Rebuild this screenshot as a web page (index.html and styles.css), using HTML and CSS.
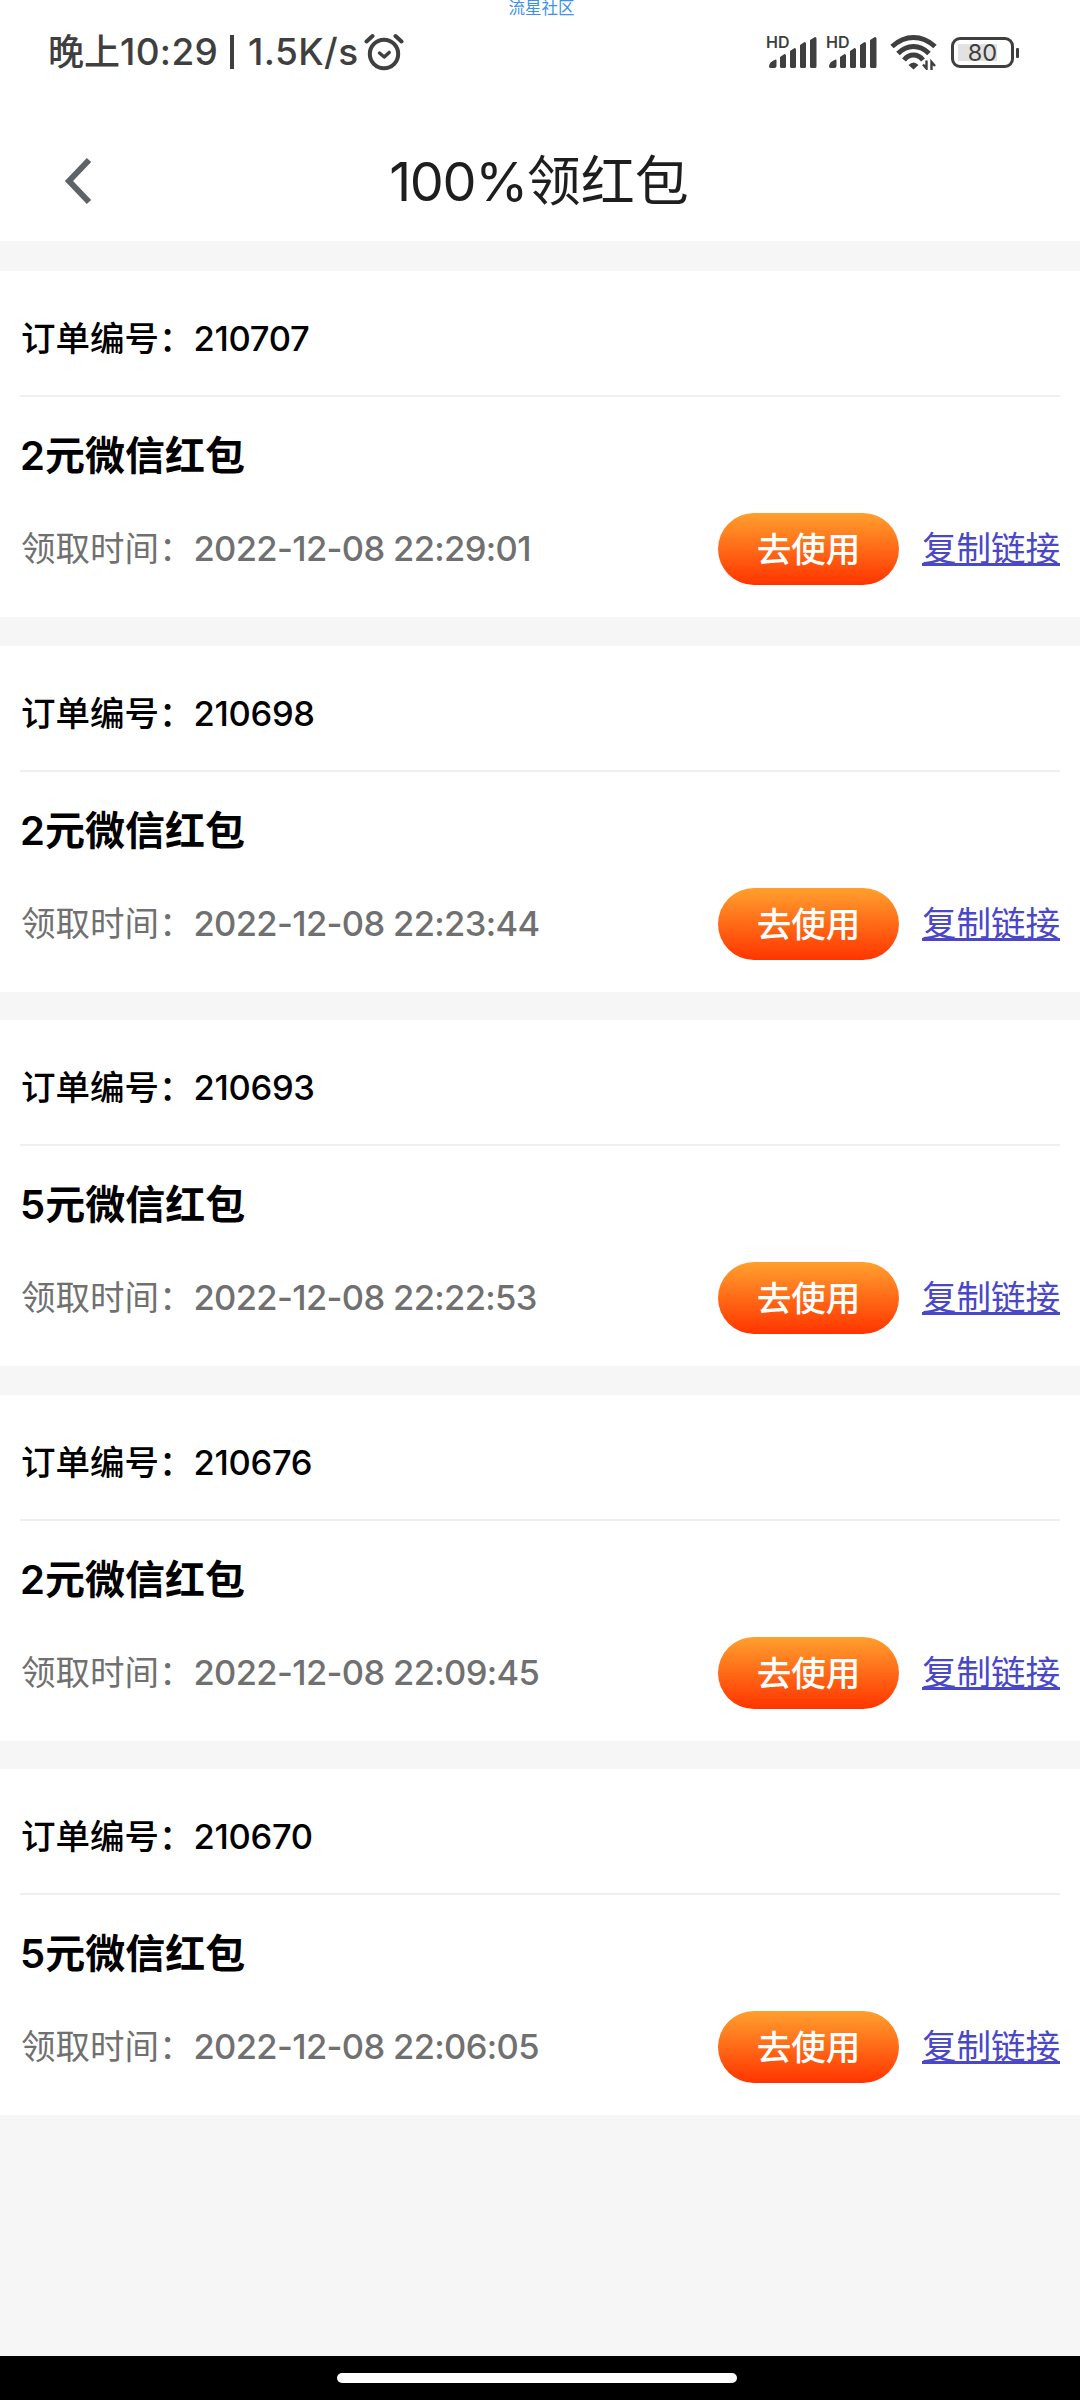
FILE: index.html
```html
<!DOCTYPE html>
<html lang="zh-CN">

<head>
    <meta charset="UTF-8">
    <meta name="viewport" content="width=device-width, initial-scale=1.0">
    <title>100%领红包</title>
    <link rel="stylesheet" href="styles.css">
</head>

<body>
    <div class="watermark">流星社区</div>

    <div class="status-bar">
        <div class="status-left">
            <span class="status-time">晚上<span>10:29</span></span>
            <span class="status-sep"></span>
            <span class="status-speed">1.5K/s</span>
            <svg class="alarm" width="40" height="38" viewBox="0 0 40 38" fill="none" stroke="#3f3f3f" stroke-linecap="round">
                <circle cx="20" cy="21" r="14.2" stroke-width="4" />
                <path d="M15.5 20l4.7 4 5-4.6" stroke-width="3.4" stroke-linejoin="round" />
                <path d="M2.5 8.5l6-5.5M37.5 8.5l-6-5.5" stroke-width="4" />
            </svg>
        </div>
        <div class="status-right">
            <div class="signal">
                <span class="hd">HD</span>
                <svg width="52" height="34" viewBox="0 0 52 34" fill="#3f3f3f">
                    <path d="M2 31.500Q2 27 8.500 24.500q1 0 1 1V31q0 2-2 2H4Q2 33 2 31.500zM13 22l4.500-3q1.500 0 1.500 1.500V31.500q0 1.500-1.500 1.500h-3Q13 33 13 31.500zM23 16l4.500-3q1.500 0 1.500 1.500v17q0 1.500-1.500 1.500h-3Q23 33 23 31.500zM33 10l4.500-3q1.500 0 1.500 1.500v23q0 1.500-1.500 1.500h-3Q33 33 33 31.500zM43 5l5-3q1.500 0 1.500 1.500v28q0 1.500-1.500 1.500h-3.500Q43 33 43 31.500z" />
                </svg>
            </div>
            <div class="signal">
                <span class="hd">HD</span>
                <svg width="52" height="34" viewBox="0 0 52 34" fill="#3f3f3f">
                    <path d="M2 31.500Q2 27 8.500 24.500q1 0 1 1V31q0 2-2 2H4Q2 33 2 31.500zM13 22l4.500-3q1.500 0 1.500 1.500V31.500q0 1.500-1.500 1.500h-3Q13 33 13 31.500zM23 16l4.500-3q1.500 0 1.500 1.500v17q0 1.500-1.500 1.500h-3Q23 33 23 31.500zM33 10l4.500-3q1.500 0 1.500 1.500v23q0 1.500-1.500 1.500h-3Q33 33 33 31.500zM43 5l5-3q1.500 0 1.500 1.500v28q0 1.500-1.500 1.500h-3.500Q43 33 43 31.500z" />
                </svg>
            </div>
            <svg class="wifi" width="48" height="36" viewBox="0 0 48 36" fill="none" stroke="#3f3f3f" stroke-width="5">
                <path d="M2 12.500Q12 3.500 23.500 3.500T45 12.500" />
                <path d="M8 19.500Q15 12.500 23.500 12.500T39 19.500" />
                <path d="M14 26Q18 21 23.500 21T33 26" />
                <path d="M18.500 31q5-5 10 0l-5 4.500z" fill="#3f3f3f" stroke="none" />
                <path d="M36.500 26.500v8l-3.500-4M41.500 36v-8l3.500 4" stroke-width="2.400" />
            </svg>
            <div class="battery"><span>80</span></div>
        </div>
    </div>

    <div class="header">
        <svg class="back" width="30" height="50" viewBox="0 0 30 50" fill="none" stroke="#5d6366" stroke-width="6">
            <path d="M25 4L5 25l20 21" />
        </svg>
        <h1><span>100%</span>领红包</h1>
    </div>

    <div class="list">
        <div class="card">
            <div class="order">订单编号：<span>210707</span></div>
            <h2>2元微信红包</h2>
            <div class="row">
                <div class="time">领取时间：<span>2022-12-08 22:29:01</span></div>
                <a class="btn">去使用</a>
                <a class="copy">复制链接</a>
            </div>
        </div>
        <div class="card">
            <div class="order">订单编号：<span>210698</span></div>
            <h2>2元微信红包</h2>
            <div class="row">
                <div class="time">领取时间：<span>2022-12-08 22:23:44</span></div>
                <a class="btn">去使用</a>
                <a class="copy">复制链接</a>
            </div>
        </div>
        <div class="card">
            <div class="order">订单编号：<span>210693</span></div>
            <h2>5元微信红包</h2>
            <div class="row">
                <div class="time">领取时间：<span>2022-12-08 22:22:53</span></div>
                <a class="btn">去使用</a>
                <a class="copy">复制链接</a>
            </div>
        </div>
        <div class="card">
            <div class="order">订单编号：<span>210676</span></div>
            <h2>2元微信红包</h2>
            <div class="row">
                <div class="time">领取时间：<span>2022-12-08 22:09:45</span></div>
                <a class="btn">去使用</a>
                <a class="copy">复制链接</a>
            </div>
        </div>
        <div class="card">
            <div class="order">订单编号：<span>210670</span></div>
            <h2>5元微信红包</h2>
            <div class="row">
                <div class="time">领取时间：<span>2022-12-08 22:06:05</span></div>
                <a class="btn">去使用</a>
                <a class="copy">复制链接</a>
            </div>
        </div>
    </div>

    <div class="nav-bar">
        <div class="pill"></div>
    </div>
</body>

</html>
```
FILE: styles.css
```css
* {
    box-sizing: border-box;
}

body {
    margin: 0;
    height: 2400px;
    display: flex;
    flex-direction: column;
    font-family: Inter, "Noto Sans CJK SC", sans-serif;
    background-color: #f6f6f6;
    overflow: hidden;
}

/* 顶部水印 */
.watermark {
    position: absolute;
    top: 0;
    left: 0;
    width: 1083px;
    text-align: center;
    font-size: 16.5px;
    line-height: 17px;
    color: #3c92e8;
}

.status-bar {
    height: 104px;
    padding: 0 61px 0 48px;
    display: flex;
    justify-content: space-between;
    background: white;
    color: #3f3f3f;
}

.status-left {
    display: flex;
    height: 104px;
    align-items: center;
    font-size: 36px;
    font-weight: 500;
    line-height: 106px;
}

.status-time {
    width: 182px;
    white-space: nowrap;
}

.status-time span {
    font-size: 37px;
    letter-spacing: 0.3px;
}

.status-sep {
    width: 4px;
    height: 34px;
    background: #3f3f3f;
}

.status-speed {
    width: 114px;
    margin-left: 14px;
    font-size: 37px;
    letter-spacing: 0.4px;
    white-space: nowrap;
}

.alarm {
    margin-left: 2px;
}

.status-right {
    display: flex;
    align-items: center;
}

.signal {
    position: relative;
    width: 60px;
    height: 34px;
}

.signal svg {
    display: block;
}

.hd {
    position: absolute;
    left: -1px;
    top: -1px;
    font-size: 16px;
    font-weight: 600;
    line-height: 16px;
}

.wifi {
    margin-left: 3px;
}

.battery {
    position: relative;
    width: 63px;
    height: 31px;
    margin: 0 5px 0 13px;
    border: 3px solid #3f3f3f;
    border-radius: 9px;
    background: linear-gradient(#e2e2e2, #e2e2e2) 4px 4px / 39px 17px no-repeat;
    font-size: 23.5px;
    line-height: 26px;
    text-align: center;
}

.battery::after {
    content: "";
    position: absolute;
    right: -8px;
    top: 8px;
    width: 3px;
    height: 10px;
    border-radius: 1px;
    background: #3f3f3f;
}

.header {
    height: 137px;
    padding: 17px 64px 0;
    display: flex;
    align-items: center;
    background: white;
}

.header h1 {
    flex: 1;
    margin: 0 32px 0 0;
    text-align: center;
    font-size: 54px;
    font-weight: 400;
    line-height: 121px;
    color: #1e1e1e;
}

.header h1 span {
    letter-spacing: -1.4px;
}

.list {
    flex: 1;
    padding-top: 30px;
}

.card {
    height: 346px;
    margin-bottom: 28.6px;
    padding: 0 20px;
    background: white;
}

.order {
    height: 126px;
    padding-left: 1px;
    border-bottom: 2px solid #efefef;
    font-size: 34.5px;
    font-weight: 500;
    line-height: 136px;
    color: #000;
}

.order span {
    letter-spacing: -0.3px;
}

.card h2 {
    height: 116px;
    margin: 0;
    font-size: 40px;
    font-weight: 600;
    line-height: 117px;
}

.row {
    display: flex;
    align-items: center;
    height: 72px;
}

.time {
    flex: 1;
    padding-left: 1px;
    font-size: 34.5px;
    line-height: 74px;
    color: #707070;
}

.time span {
    font-weight: 500;
    letter-spacing: -0.65px;
}

.btn {
    width: 181px;
    height: 72px;
    margin-right: 23px;
    border-radius: 36px;
    background: linear-gradient(#ffa02e, #ff3400);
    font-size: 34.6px;
    font-weight: 500;
    line-height: 72px;
    text-align: center;
    color: white;
}

.copy {
    font-size: 34.5px;
    line-height: 74px;
    color: #4a47c8;
    text-decoration: underline;
    text-decoration-thickness: 3px;
}

/* 底部手势条 */
.nav-bar {
    height: 44px;
    padding-right: 6px;
    display: flex;
    justify-content: center;
    align-items: center;
    background: black;
}

.pill {
    width: 400px;
    height: 10px;
    border-radius: 5px;
    background: white;
}
```
